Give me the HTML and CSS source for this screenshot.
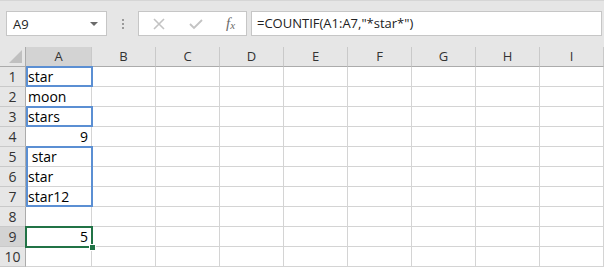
FILE: index.html
```html
<!DOCTYPE html>
<html>
<head>
	<meta charset="UTF-8">
	<title>COUNTIF</title>
	<link rel="stylesheet" href="styles.css">
</head>
<body>
	<div class="toolbar">
		<div class="namebox">
			<span>A9</span>
			<span class="arrow"></span>
		</div>
		<div class="dots"><i></i><i></i><i></i></div>
		<div class="tools">
			<svg width="14" height="14" viewBox="0 0 14 14"><path d="M2 2 L12 12 M12 2 L2 12" stroke="#c3c3c3" stroke-width="1.6"/></svg>
			<svg width="16" height="14" viewBox="0 0 16 14"><path d="M2 7 L6 11 L14 3" stroke="#c3c3c3" stroke-width="1.8" fill="none"/></svg>
			<span class="fx">f<sub>x</sub></span>
		</div>
		<div class="formula">=COUNTIF(A1:A7,"*star*")</div>
	</div>

	<div class="sheet">
		<div class="corner"><span class="tri"></span></div>
		<div class="colhead sel">A</div>
		<div class="colhead">B</div>
		<div class="colhead">C</div>
		<div class="colhead">D</div>
		<div class="colhead">E</div>
		<div class="colhead">F</div>
		<div class="colhead">G</div>
		<div class="colhead">H</div>
		<div class="colhead">I</div>

		<div class="rowhead">1</div><div class="cell">star</div><div class="cell"></div><div class="cell"></div><div class="cell"></div><div class="cell"></div><div class="cell"></div><div class="cell"></div><div class="cell"></div><div class="cell"></div>
		<div class="rowhead">2</div><div class="cell">moon</div><div class="cell"></div><div class="cell"></div><div class="cell"></div><div class="cell"></div><div class="cell"></div><div class="cell"></div><div class="cell"></div><div class="cell"></div>
		<div class="rowhead">3</div><div class="cell">stars</div><div class="cell"></div><div class="cell"></div><div class="cell"></div><div class="cell"></div><div class="cell"></div><div class="cell"></div><div class="cell"></div><div class="cell"></div>
		<div class="rowhead">4</div><div class="cell num">9</div><div class="cell"></div><div class="cell"></div><div class="cell"></div><div class="cell"></div><div class="cell"></div><div class="cell"></div><div class="cell"></div><div class="cell"></div>
		<div class="rowhead">5</div><div class="cell">&nbsp;star</div><div class="cell"></div><div class="cell"></div><div class="cell"></div><div class="cell"></div><div class="cell"></div><div class="cell"></div><div class="cell"></div><div class="cell"></div>
		<div class="rowhead">6</div><div class="cell">star</div><div class="cell"></div><div class="cell"></div><div class="cell"></div><div class="cell"></div><div class="cell"></div><div class="cell"></div><div class="cell"></div><div class="cell"></div>
		<div class="rowhead">7</div><div class="cell">star12</div><div class="cell"></div><div class="cell"></div><div class="cell"></div><div class="cell"></div><div class="cell"></div><div class="cell"></div><div class="cell"></div><div class="cell"></div>
		<div class="rowhead">8</div><div class="cell"></div><div class="cell"></div><div class="cell"></div><div class="cell"></div><div class="cell"></div><div class="cell"></div><div class="cell"></div><div class="cell"></div><div class="cell"></div>
		<div class="rowhead sel">9</div><div class="cell num">5</div><div class="cell"></div><div class="cell"></div><div class="cell"></div><div class="cell"></div><div class="cell"></div><div class="cell"></div><div class="cell"></div><div class="cell"></div>
		<div class="rowhead">10</div><div class="cell"></div><div class="cell"></div><div class="cell"></div><div class="cell"></div><div class="cell"></div><div class="cell"></div><div class="cell"></div><div class="cell"></div><div class="cell"></div>

		<!-- riquadri sopra le celle -->
		<div class="range r1"></div>
		<div class="range r3"></div>
		<div class="range r5"></div>
		<div class="active"><span class="handle"></span></div>
	</div>
</body>
</html>
```
FILE: styles.css
```css
*{
    box-sizing: border-box;
}
body{
    margin: 0;
    width: 604px;
    height: 267px;
    overflow: hidden;
    background-color: white;
    font-family: "Open Sans", "Noto Sans", sans-serif;
}

/* barra della formula */
.toolbar{
    height: 47px;
    background-color: #e6e6e6;
    border-top: 1px solid #d6d6d6;
    display: flex;
    align-items: flex-start;
    padding: 10px 2px 0 6px;
}
.namebox{
    width: 101px;
    height: 25px;
    background-color: white;
    border: 1px solid #c6c6c6;
    display: flex;
    align-items: center;
    justify-content: space-between;
    padding: 0 8px 0 6px;
    font-size: 13px;
    color: #222;
}
.arrow{
    width: 0;
    height: 0;
    border-left: 4px solid transparent;
    border-right: 4px solid transparent;
    border-top: 4px solid #6a6a6a;
}
.dots{
    width: 31px;
    height: 25px;
    display: flex;
    flex-direction: column;
    align-items: center;
    justify-content: center;
    gap: 2px;
}
.dots i{
    width: 2px;
    height: 2px;
    background-color: #9a9a9a;
}
.tools{
    width: 109px;
    height: 25px;
    background-color: white;
    border: 1px solid #c6c6c6;
    display: flex;
    align-items: center;
    padding: 0 6px 0 13px;
    gap: 22px;
}
.fx{
    font-family: "Liberation Serif", serif;
    font-style: italic;
    font-size: 15px;
    color: #6a6a6a;
    margin-left: 0;
    line-height: 1;
}
.fx sub{
    font-size: 11px;
    vertical-align: -1px;
}
.formula{
    flex: 1;
    margin-left: 4px;
    height: 25px;
    background-color: white;
    border: 1px solid #c6c6c6;
    font-size: 13px;
    color: #222;
    padding: 2px 5px;
}

/* foglio */
.sheet{
    position: relative;
    display: grid;
    grid-template-columns: 26px 66px repeat(8, 64px);
    grid-template-rows: repeat(11, 20px);
    font-size: 14px;
}
.corner{
    background-color: #e6e6e6;
    border-right: 1px solid #ababab;
    border-bottom: 1px solid #ababab;
    position: relative;
}
.tri{
    position: absolute;
    right: 3px;
    bottom: 3px;
    width: 0;
    height: 0;
    border-left: 13px solid transparent;
    border-bottom: 13px solid #c0c0c0;
}
.colhead{
    background-color: #e6e6e6;
    border-right: 1px solid #c9c9c9;
    border-bottom: 1px solid #ababab;
    text-align: center;
    line-height: 19px;
    font-size: 13px;
    color: #333;
}
.rowhead{
    background-color: #e6e6e6;
    border-right: 1px solid #ababab;
    border-bottom: 1px solid #c9c9c9;
    text-align: center;
    line-height: 19px;
    color: #333;
}
.colhead.sel, .rowhead.sel{
    background-color: #d3d3d3;
}
.cell{
    border-right: 1px solid #d4d4d4;
    border-bottom: 1px solid #d4d4d4;
    line-height: 19px;
    padding-left: 2px;
    color: black;
    white-space: pre;
}
.cell.num{
    text-align: right;
    padding-right: 3px;
}

.range{
    position: absolute;
    left: 26px;
    width: 67px;
    border: 2px solid #5b8fd3;
}
.r1{
    top: 19px;
    height: 21px;
}
.r3{
    top: 59px;
    height: 21px;
}
.r5{
    top: 99px;
    height: 61px;
}
.active{
    position: absolute;
    left: 25px;
    top: 179px;
    width: 68px;
    height: 22px;
    border: 2px solid #217346;
}
.handle{
    position: absolute;
    right: -5px;
    bottom: -5px;
    width: 7px;
    height: 7px;
    background-color: #217346;
    border: 1px solid white;
}
```
